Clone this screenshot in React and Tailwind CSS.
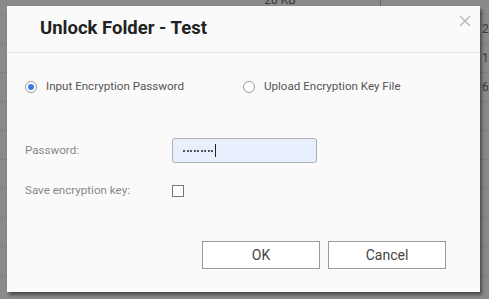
import React from "react";

const rows = ["", "2", "1", "6", "", "", "", "", "", ""];

export default function App() {
  return (
    <div className="relative w-[489px] h-[299px] overflow-hidden bg-[#8a8a8a] font-['Roboto',sans-serif]">
      {/* background table behind the overlay */}
      <div className="flex flex-col -mt-[14px]">
        {rows.map((r, i) => (
          <div key={i} className="flex h-[29px] border-b border-[#808080] text-[12px] text-[#3a3a3a] leading-[29px]">
            <div className="w-[200px]" />
            <div className="w-[180px] text-center pr-[20px]">{i === 0 ? "20 KB" : ""}</div>
            <div className="w-[100px] border-l border-[#6a6a6a]" />
            <div className="pl-[2px]">{r}</div>
          </div>
        ))}
      </div>

      {/* dialog */}
      <div className="absolute left-[7px] top-[6px] w-[473px] h-[286px] bg-[#fafafa] shadow-[2px_3px_3px_rgba(0,0,0,0.45)] flex flex-col">
        <div className="relative h-[47px] border-b border-[#e3e3e3] flex items-center pl-[33px]">
          <h1 className="text-[18.5px] font-bold text-[#222]">Unlock Folder - Test</h1>
          <svg className="absolute right-[9px] top-[9px]" width="12" height="12" viewBox="0 0 12 12">
            <path d="M1 1L11 11M11 1L1 11" stroke="#b5b5b5" strokeWidth="1.3" />
          </svg>
        </div>

        <div className="flex items-center h-[16px] mt-[26px] pl-[18px] text-[11.6px] text-[#555]">
          <div className="flex items-center w-[218px]">
            <span className="w-[12px] h-[12px] rounded-full border border-[#9a9a9a] bg-white flex items-center justify-center">
              <span className="w-[6px] h-[6px] rounded-full bg-[#3b7ddd]" />
            </span>
            <span className="ml-[9px]">Input Encryption Password</span>
          </div>
          <div className="flex items-center">
            <span className="w-[12px] h-[12px] rounded-full border border-[#9a9a9a] bg-white" />
            <span className="ml-[9px]">Upload Encryption Key File</span>
          </div>
        </div>

        <div className="flex items-center mt-[43px] pl-[18px] text-[11.6px] text-[#888]">
          <span className="w-[147px]">Password:</span>
          <div className="w-[145px] h-[25px] rounded-[3px] border border-[#b0b0b0] bg-[#e8f0fe] flex items-center pl-[10px]">
            <span className="flex gap-[1.5px]">
              {Array.from({ length: 9 }).map((_, i) => (
                <span key={i} className="w-[2px] h-[2px] rounded-full bg-[#222]" />
              ))}
            </span>
            <span className="w-px h-[13px] bg-[#222] ml-[2px]" />
          </div>
        </div>

        <div className="flex items-center mt-[19px] pl-[18px] text-[11.6px] text-[#888]">
          <span className="w-[147px]">Save encryption key:</span>
          <span className="w-[12px] h-[12px] border border-[#777] bg-white" />
        </div>

        <div className="flex justify-end gap-[8px] mt-auto mb-[23px] pr-[34px] text-[14px] text-[#444]">
          <button className="w-[118px] h-[28px] border border-[#9a9a9a] bg-white">OK</button>
          <button className="w-[118px] h-[28px] border border-[#9a9a9a] bg-white">Cancel</button>
        </div>
      </div>
    </div>
  );
}
